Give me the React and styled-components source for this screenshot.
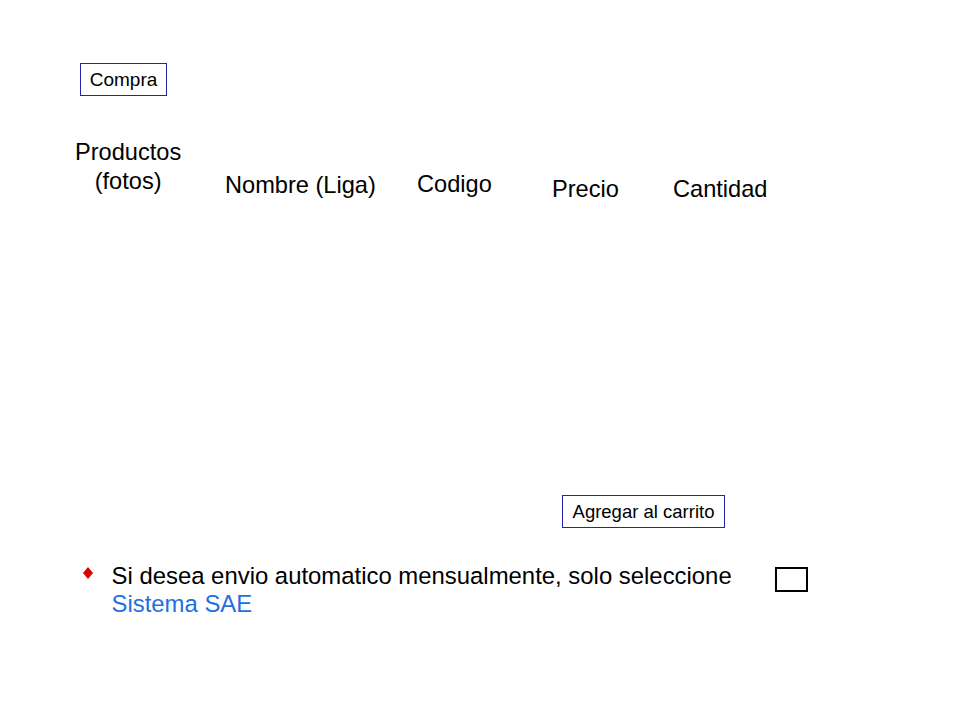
import styled, { createGlobalStyle } from "styled-components";

const GlobalStyle = createGlobalStyle`
body{
  margin: 0;
  background: #ffffff;
  font-family: "Liberation Sans", Arial, sans-serif;
  color: #000000;
}
`

const Slide = styled.div`
width: 960px;
height: 720px;
box-sizing: border-box;
padding-top: 63px;
display: flex;
flex-direction: column;
overflow: hidden;
`

const BoxButton = styled.button`
display: flex;
align-items: center;
justify-content: center;
box-sizing: border-box;
width: ${({ w }) => w}px;
height: 33px;
margin-left: ${({ left }) => left}px;
margin-top: ${({ top }) => top || 0}px;
padding: 0;
background: #ffffff;
border: 1px solid #2424a6;
border-radius: 0;
font-family: "Liberation Sans", Arial, sans-serif;
font-size: ${({ size }) => size}px;
color: #000000;
cursor: pointer;
`

const HeaderRow = styled.div`
display: grid;
grid-template-columns: 150px 192px 135px 121px auto;
align-items: start;
margin-top: 42px;
padding-left: 75px;
font-size: 23.6px;
line-height: 29px;
`

const HeaderCell = styled.div`
margin-top: ${({ offset }) => offset || 0}px;
white-space: nowrap;
`

const Stacked = styled.span`
display: inline-block;
text-align: center;
`

const Bottom = styled.div`
display: flex;
align-items: flex-start;
margin-top: 34px;
padding-left: 83px;
`

const Bullet = styled.span`
width: 10px;
height: 12px;
margin-top: 5px;
flex: none;
background: #e00000;
clip-path: polygon(50% 0, 100% 50%, 50% 100%, 0 50%);
`

const Note = styled.p`
margin: 0 0 0 18.5px;
font-size: 23.9px;
line-height: 28px;
white-space: nowrap;
`

const LinkText = styled.a`
color: #1f6fe0;
text-decoration: none;
`

const CheckBox = styled.span`
width: 33px;
height: 25px;
box-sizing: border-box;
margin-top: 5px;
margin-left: 43px;
flex: none;
border: 2px solid #000000;
`

export default function App() {
  return (
    <>
      <GlobalStyle />
      <Slide>
        <BoxButton w={87} left={80} size={19}>Compra</BoxButton>
        <HeaderRow>
          <HeaderCell>
            <Stacked>Productos<br />(fotos)</Stacked>
          </HeaderCell>
          <HeaderCell offset={33}>Nombre (Liga)</HeaderCell>
          <HeaderCell offset={32}>Codigo</HeaderCell>
          <HeaderCell offset={37}>Precio</HeaderCell>
          <HeaderCell offset={37}>Cantidad</HeaderCell>
        </HeaderRow>
        <BoxButton w={163} left={562} top={291} size={18.5}>Agregar al carrito</BoxButton>
        <Bottom>
          <Bullet />
          <Note>
            Si desea envio automatico mensualmente, solo seleccione<br />
            <LinkText href="#">Sistema SAE</LinkText>
          </Note>
          <CheckBox />
        </Bottom>
      </Slide>
    </>
  )
}
